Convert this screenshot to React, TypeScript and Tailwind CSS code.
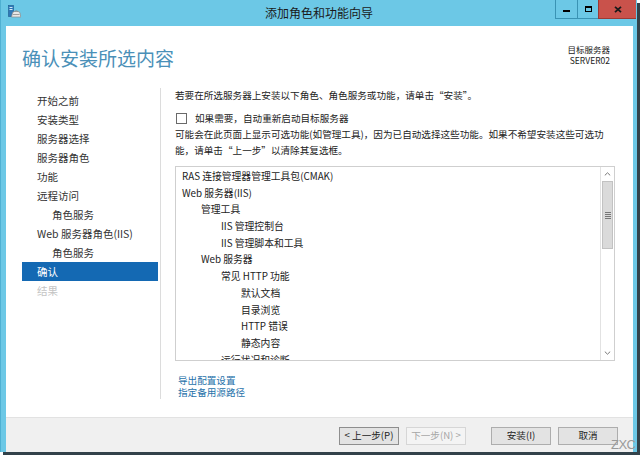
import React from "react";

const navItems: { label: string; indent?: boolean; active?: boolean; disabled?: boolean }[] = [
  { label: "开始之前" },
  { label: "安装类型" },
  { label: "服务器选择" },
  { label: "服务器角色" },
  { label: "功能" },
  { label: "远程访问" },
  { label: "角色服务", indent: true },
  { label: "Web 服务器角色(IIS)" },
  { label: "角色服务", indent: true },
  { label: "确认", active: true },
  { label: "结果", disabled: true },
];

const listItems: { label: string; level: number }[] = [
  { label: "RAS 连接管理器管理工具包(CMAK)", level: 0 },
  { label: "Web 服务器(IIS)", level: 0 },
  { label: "管理工具", level: 1 },
  { label: "IIS 管理控制台", level: 2 },
  { label: "IIS 管理脚本和工具", level: 2 },
  { label: "Web 服务器", level: 1 },
  { label: "常见 HTTP 功能", level: 2 },
  { label: "默认文档", level: 3 },
  { label: "目录浏览", level: 3 },
  { label: "HTTP 错误", level: 3 },
  { label: "静态内容", level: 3 },
  { label: "运行状况和诊断", level: 2 },
];

const levelPad = ["pl-[6px]", "pl-[25px]", "pl-[45px]", "pl-[65px]"];

function AppIcon() {
  return (
    <svg width="13" height="13" viewBox="0 0 13 13">
      <rect x="0.5" y="0.5" width="5" height="11" fill="#2f78b8" stroke="#1d5b90" strokeWidth="0.6" />
      <rect x="1.5" y="2" width="3" height="1" fill="#cfe6f6" />
      <rect x="1.5" y="4" width="3" height="1" fill="#cfe6f6" />
      <path d="M3.5 12 L4.5 8 Q5 6.5 6.5 6.5 L10 6.5 Q11.5 6.5 12 8 L12.8 12 Z" fill="#e8e8e8" stroke="#8a8a8a" strokeWidth="0.7" />
      <path d="M6.5 6.5 Q8.2 4.5 10 6.5" fill="none" stroke="#8a8a8a" strokeWidth="0.7" />
      <rect x="5" y="9" width="6.5" height="1" fill="#a0a0a0" />
    </svg>
  );
}

export default function App() {
  return (
    <div className="relative w-[644px] h-[457px] bg-white overflow-hidden font-['Noto_Sans_CJK_SC','Noto_Sans',sans-serif] text-[#222]">
      <div className="w-[637px] h-[452px] bg-[#6cc8e6] flex flex-col shadow-[3px_3px_0_0_#33424a] border-l border-[#4fb0d2]">
        {/* Title bar */}
        <div className="h-[26px] grid grid-cols-[1fr_auto_1fr] shrink-0">
          <div className="pl-[7px] pt-[5px]">
            <AppIcon />
          </div>
          <div className="text-[12px] leading-[26px] text-[#1a1a1a]">添加角色和功能向导</div>
          <div className="flex justify-end items-start pr-[1px]">
            <div className="w-[22px] h-[19px] border border-[#3a93b4] border-r-0 border-t-0 flex items-center justify-center">
              <div className="w-[7px] h-[2px] bg-black mt-[3px]" />
            </div>
            <div className="w-[21px] h-[19px] border-b border-l border-[#3a93b4] flex items-center justify-center">
              <div className="w-[7px] h-[6px] border border-black border-t-2" />
            </div>
            <div className="w-[38px] h-[19px] bg-[#c9524b] border-b border-l border-[#9c3a34] flex items-center justify-center">
              <svg width="8" height="7" viewBox="0 0 8 7">
                <path d="M1 0.8 L7 6.2 M7 0.8 L1 6.2" stroke="#1a1a1a" strokeWidth="1.8" />
              </svg>
            </div>
          </div>
        </div>

        {/* Client area */}
        <div className="flex-1 mr-[4px] ml-[5px] mb-[4px] bg-white flex flex-col">
          {/* Header */}
          <div className="h-[62px] shrink-0 flex justify-between">
            <div className="pl-[16px] pt-[19px] text-[19px] leading-[26px] text-[#4a90b8]">确认安装所选内容</div>
            <div className="pr-[23px] pt-[18px] text-right text-[8.5px] leading-[11px] text-[#222]">
              <div>目标服务器</div>
              <div>SERVER02</div>
            </div>
          </div>

          {/* Body */}
          <div className="flex-1 flex pb-[18px]">
            <div className="w-[155px] shrink-0 border-r border-[#dcdcdc] pt-[3px] pl-[16px] pr-[2px]">
              {navItems.map((it, i) => (
                <div
                  key={i}
                  className={
                    "h-[19px] leading-[19px] text-[10.5px] " +
                    (it.indent ? "pl-[30px] " : "pl-[15px] ") +
                    (it.active ? "bg-[#1469b3] text-white " : it.disabled ? "text-[#c4c4c4] " : "text-[#333] ")
                  }
                >
                  {it.label}
                </div>
              ))}
            </div>

            <div className="flex-1 pl-[14px] pr-[18px] flex flex-col text-[9.6px] text-[#222]">
              <div className="leading-[14px] whitespace-nowrap">若要在所选服务器上安装以下角色、角色服务或功能，请单击“安装”。</div>
              <div className="mt-[9px] h-[14px] flex items-center">
                <div className="w-[11px] h-[11px] border border-[#6a6a6a] bg-white ml-[1px]" />
                <div className="ml-[8px] leading-[14px]">如果需要，自动重新启动目标服务器</div>
              </div>
              <div className="mt-[1px] leading-[16px] whitespace-nowrap">
                可能会在此页面上显示可选功能(如管理工具)，因为已自动选择这些功能。如果不希望安装这些可选功
                <br />
                能，请单击“上一步”以清除其复选框。
              </div>

              <div className="mt-[8px] h-[195px] border border-[#cfcfcf] flex bg-white">
                <div className="flex-1 overflow-hidden pt-[1px]">
                  {listItems.map((it, i) => (
                    <div key={i} className={"h-[16.7px] leading-[16.7px] text-[9.8px] whitespace-nowrap " + levelPad[it.level]}>
                      {it.label}
                    </div>
                  ))}
                </div>
                <div className="w-[14px] shrink-0 border-l border-[#e2e2e2] flex flex-col bg-white">
                  <div className="h-[14px] flex items-center justify-center">
                    <svg width="7" height="4" viewBox="0 0 7 4">
                      <path d="M0.8 3.4 L3.5 0.8 L6.2 3.4" fill="none" stroke="#777" strokeWidth="1" />
                    </svg>
                  </div>
                  <div className="h-[68px] bg-[#dadada] border border-[#c2c2c2] mx-[1px] flex items-center justify-center">
                    <div className="flex flex-col gap-[1px]">
                      <div className="w-[6px] h-[1px] bg-[#777]" />
                      <div className="w-[6px] h-[1px] bg-[#777]" />
                      <div className="w-[6px] h-[1px] bg-[#777]" />
                      <div className="w-[6px] h-[1px] bg-[#777]" />
                    </div>
                  </div>
                  <div className="flex-1" />
                  <div className="h-[14px] flex items-center justify-center">
                    <svg width="7" height="4" viewBox="0 0 7 4">
                      <path d="M0.8 0.6 L3.5 3.2 L6.2 0.6" fill="none" stroke="#777" strokeWidth="1" />
                    </svg>
                  </div>
                </div>
              </div>

              <div className="mt-[13px] pl-[3px] text-[#1f72aa] leading-[12.3px]">
                <div>导出配置设置</div>
                <div>指定备用源路径</div>
              </div>
            </div>
          </div>

          {/* Footer */}
          <div className="h-[35px] shrink-0 border-t border-[#e2e2e2] bg-[#f0f0f0] flex justify-end items-start pt-[9px] pr-[15px] text-[9.6px]">
            <div className="w-[60px] h-[18px] border border-[#8e8e8e] bg-[#e3e3e3] flex items-center justify-center">&lt; 上一步(P)</div>
            <div className="ml-[7px] w-[60px] h-[18px] border border-[#d6d6d6] bg-[#f4f4f4] text-[#a6a6a6] flex items-center justify-center">下一步(N) &gt;</div>
            <div className="ml-[25px] w-[60px] h-[18px] border border-[#adadad] bg-[#e3e3e3] flex items-center justify-center">安装(I)</div>
            <div className="ml-[7px] w-[60px] h-[18px] border border-[#adadad] bg-[#e3e3e3] flex items-center justify-center">取消</div>
          </div>
        </div>
      </div>

      <div className="absolute left-[611px] top-[438px] text-[13px] leading-[14px] text-[#9a9a9a] font-['Liberation_Sans',sans-serif] tracking-[-0.5px]">ZXC</div>
    </div>
  );
}
